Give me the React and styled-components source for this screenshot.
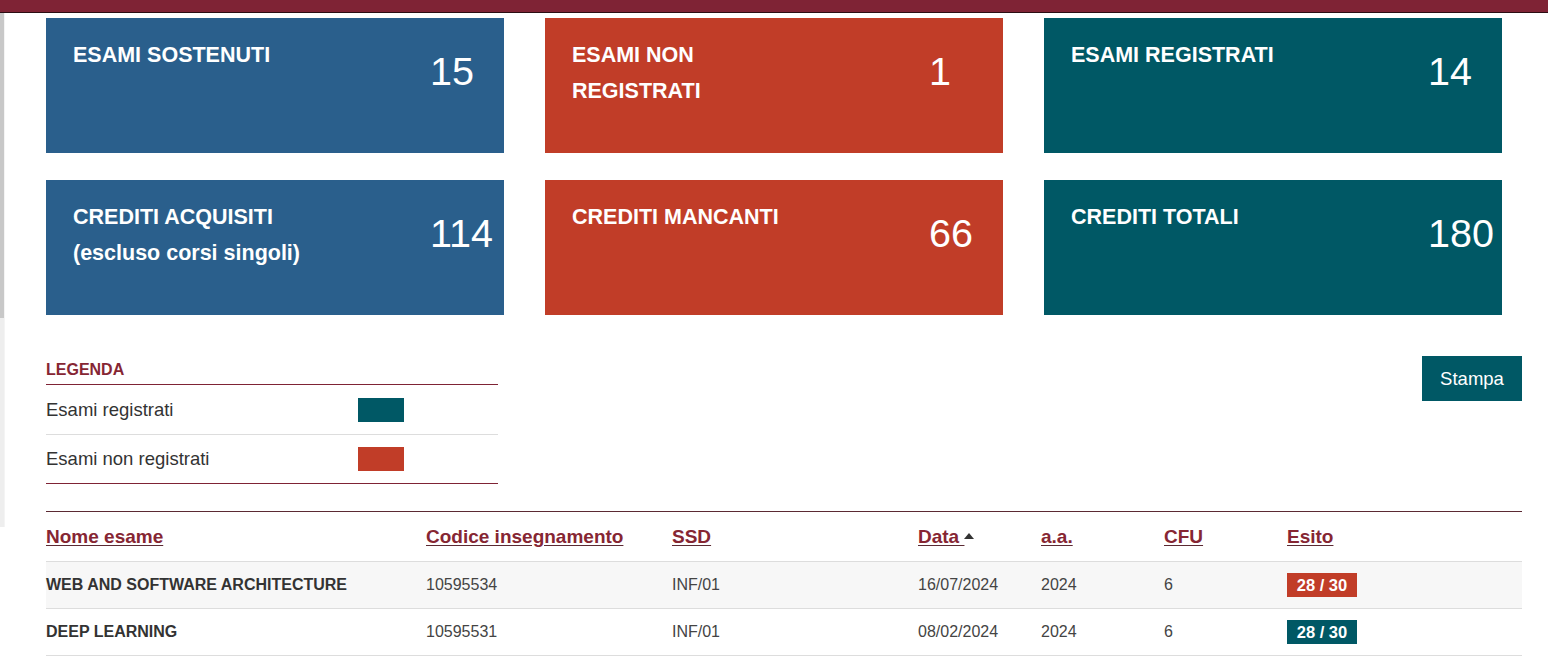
import React from 'react';
import styled, { createGlobalStyle } from 'styled-components';

const GlobalStyle = createGlobalStyle`
  body {
    margin: 0;
    font-family: "Liberation Sans", Arial, sans-serif;
    background: #fff;
    color: #333;
  }
`;

const cards = [
  { title: 'ESAMI SOSTENUTI', value: '15', color: '#2a5f8c' },
  { title: 'ESAMI NON REGISTRATI', value: '1', color: '#c13d28' },
  { title: 'ESAMI REGISTRATI', value: '14', color: '#005865' },
  { title: 'CREDITI ACQUISITI', sub: '(escluso corsi singoli)', value: '114', color: '#2a5f8c' },
  { title: 'CREDITI MANCANTI', value: '66', color: '#c13d28' },
  { title: 'CREDITI TOTALI', value: '180', color: '#005865' },
];

const exams = [
  { name: 'WEB AND SOFTWARE ARCHITECTURE', code: '10595534', ssd: 'INF/01', date: '16/07/2024', aa: '2024', cfu: '6', grade: '28 / 30', registered: false },
  { name: 'DEEP LEARNING', code: '10595531', ssd: 'INF/01', date: '08/02/2024', aa: '2024', cfu: '6', grade: '28 / 30', registered: true },
];

const App = () => {
  return (
    <>
      <GlobalStyle />
      <TopBar />
      <Page>
        <SideEdge />
        <Main>
          <CardGrid>
            {cards.map(c => (
              <Card key={c.title} color={c.color}>
                <CardTitle narrow={!c.sub}>
                  {c.title}
                  {c.sub && <><br />{c.sub}</>}
                </CardTitle>
                <CardValue>{c.value}</CardValue>
              </Card>
            ))}
          </CardGrid>

          <LegendRow>
            <Legend>
              <LegendTitle>LEGENDA</LegendTitle>
              <LegendItem>
                <span>Esami registrati</span>
                <Swatch color="#005865" />
              </LegendItem>
              <LegendItem last>
                <span>Esami non registrati</span>
                <Swatch color="#c13d28" />
              </LegendItem>
            </Legend>
            <PrintButton>Stampa</PrintButton>
          </LegendRow>

          <Table>
            <colgroup>
              <col style={{ width: 380 }} />
              <col style={{ width: 246 }} />
              <col style={{ width: 246 }} />
              <col style={{ width: 123 }} />
              <col style={{ width: 123 }} />
              <col style={{ width: 123 }} />
              <col />
            </colgroup>
            <thead>
              <tr>
                <Th><a>Nome esame</a></Th>
                <Th><a>Codice insegnamento</a></Th>
                <Th><a>SSD</a></Th>
                <Th><a>Data </a><SortCaret /></Th>
                <Th><a>a.a.</a></Th>
                <Th><a>CFU</a></Th>
                <Th><a>Esito</a></Th>
              </tr>
            </thead>
            <tbody>
              {exams.map((e, i) => (
                <Row key={e.code} striped={i % 2 === 0}>
                  <NameCell>{e.name}</NameCell>
                  <Td>{e.code}</Td>
                  <Td>{e.ssd}</Td>
                  <Td>{e.date}</Td>
                  <Td>{e.aa}</Td>
                  <Td>{e.cfu}</Td>
                  <Td><Grade registered={e.registered}>{e.grade}</Grade></Td>
                </Row>
              ))}
            </tbody>
          </Table>
        </Main>
      </Page>
    </>
  );
};

const TopBar = styled.div`
  height: 12px;
  background-color: #7f2335;
  border-bottom: 1px solid #2b0d13;
`;

const Page = styled.div`
  display: flex;
`;

const SideEdge = styled.div`
  width: 5px;
  height: 514px;
  flex-shrink: 0;
  background: linear-gradient(to bottom, #c8c8c8 0, #c8c8c8 305px, #eeeeee 305px);
  border-right: 1px solid #f4f4f4;
  box-sizing: border-box;
`;

const Main = styled.div`
  width: 1476px;
  padding: 5px 0 0 41px;
`;

const CardGrid = styled.div`
  display: grid;
  grid-template-columns: repeat(3, 458px);
  column-gap: 41px;
  row-gap: 27px;
`;

const Card = styled.div`
  height: 135px;
  box-sizing: border-box;
  background-color: ${props => props.color};
  color: #fff;
  display: grid;
  grid-template-columns: 357px 1fr;
  padding: 19px 0 0 27px;
`;

const CardTitle = styled.div`
  font-weight: bold;
  font-size: 21.5px;
  line-height: 36px;
  max-width: ${props => (props.narrow ? '225px' : 'none')};
  white-space: ${props => (props.narrow ? 'normal' : 'nowrap')};
`;

const CardValue = styled.div`
  font-size: 39.5px;
  line-height: 44px;
  margin-top: 12px;
`;

const LegendRow = styled.div`
  display: flex;
  justify-content: space-between;
  align-items: flex-start;
  margin-top: 41px;
`;

const Legend = styled.div`
  width: 452px;
  border-bottom: 1px solid #7f2335;
`;

const LegendTitle = styled.div`
  color: #862633;
  font-weight: bold;
  font-size: 16px;
  line-height: 18px;
  padding-top: 5px;
  padding-bottom: 5px;
  border-bottom: 1px solid #7f2335;
`;

const LegendItem = styled.div`
  display: grid;
  grid-template-columns: 312px 46px;
  align-items: center;
  height: ${props => (props.last ? '48px' : '49px')};
  border-bottom: ${props => (props.last ? 'none' : '1px solid #dddddd')};
  font-size: 18.5px;
  color: #333;
`;

const Swatch = styled.div`
  width: 46px;
  height: 24px;
  background-color: ${props => props.color};
`;

const PrintButton = styled.button`
  width: 100px;
  height: 45px;
  border: none;
  background-color: #005865;
  color: #fff;
  font-family: "Liberation Sans", Arial, sans-serif;
  font-size: 18.5px;
  padding: 0;
  cursor: pointer;
`;

const Table = styled.table`
  width: 1476px;
  margin-top: 27px;
  border-collapse: collapse;
  table-layout: fixed;
  border-top: 1px solid #5b2a33;
`;

const Th = styled.th`
  text-align: left;
  height: 49px;
  padding: 0;
  border-bottom: 1px solid #dddddd;
  font-size: 19px;
  font-weight: bold;
  white-space: nowrap;

  a {
    color: #862633;
    text-decoration: underline;
    text-decoration-color: #5b2a33;
    text-underline-offset: 2px;
    white-space: pre;
  }
`;

const SortCaret = styled.span`
  display: inline-block;
  width: 0;
  height: 0;
  border-left: 5px solid transparent;
  border-right: 5px solid transparent;
  border-bottom: 6px solid #333;
  vertical-align: 4px;
`;

const Row = styled.tr`
  background-color: ${props => (props.striped ? '#f7f7f7' : '#fff')};
`;

const Td = styled.td`
  height: 46px;
  padding: 0;
  border-bottom: 1px solid #dddddd;
  font-size: 16px;
  color: #444;
`;

const NameCell = styled(Td)`
  font-weight: bold;
  color: #333;
`;

const Grade = styled.span`
  display: inline-block;
  width: 70px;
  height: 24px;
  line-height: 24px;
  text-align: center;
  color: #fff;
  font-weight: bold;
  font-size: 16.5px;
  background-color: ${props => (props.registered ? '#005865' : '#c13d28')};
`;

export default App;
